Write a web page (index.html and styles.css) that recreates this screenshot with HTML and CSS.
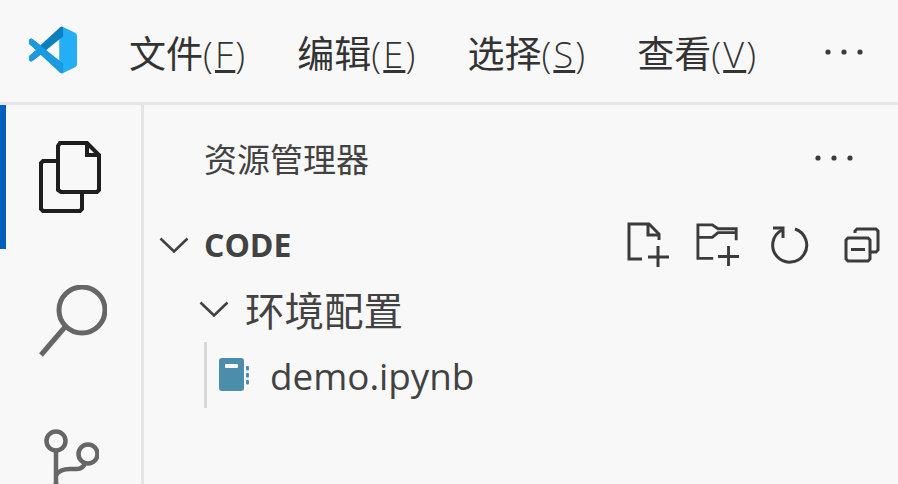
FILE: index.html
```html
<!DOCTYPE html>
<html lang="zh-CN">
<head>
  <meta charset="UTF-8" />
  <title>CODE - Visual Studio Code</title>
  <link rel="stylesheet" href="styles.css">
</head>
<body>
  <div class="titlebar">
    <svg class="logo" viewBox="0 0 100 100">
      <path d="M71 2 L96 14 Q100 16 100 21 L100 79 Q100 84 96 86 L71 98 Q67 100 63 96 L63 72 V28 L63 4 Q67 0 71 2Z" fill="#24aef6"/>
      <path d="M71 2 Q67 0 63 4 L24 40 L7 27 Q4 25 1 28 L-1 31 Q-3 34 0 37 L15 50 L0 63 Q-3 66 -1 69 L1 72 Q4 75 7 73 L24 60 L63 28 L71 22Z" fill="#0b7fc0"/>
      <path d="M7 27 Q4 25 1 28 L-1 31 Q-3 34 0 37 L15 50 L0 63 Q-3 66 -1 69 L1 72 Q4 75 7 73 L24 60 L63 96 Q67 100 71 98 L71 78 L7 27Z" fill="#1a9be0"/>
    </svg>
    <div class="menu">
      <span class="menu-item">文件<span class="paren">(<u>F</u>)</span></span>
      <span class="menu-item">编辑<span class="paren">(<u>E</u>)</span></span>
      <span class="menu-item">选择<span class="paren">(<u>S</u>)</span></span>
      <span class="menu-item">查看<span class="paren">(<u>V</u>)</span></span>
    </div>
    <svg class="dots dots-menu" viewBox="0 0 38 6"><circle cx="3" cy="3" r="2.6"/><circle cx="19" cy="3" r="2.6"/><circle cx="35" cy="3" r="2.6"/></svg>
  </div>

  <div class="main">
    <div class="activitybar">
      <div class="activity-item active">
        <svg class="activity-icon" viewBox="0 0 62 72" fill="none" stroke="#1e1e1e" stroke-width="4">
          <path d="M21 2 H48 L60 14 V49 L58 51 H22 L19 49 V5Z"/>
          <path d="M48 2 V14 H60"/>
          <path d="M19 20 H4 L2 22 V68 L4 70 H41 L43 68 V51"/>
        </svg>
      </div>
      <div class="activity-item search-item">
        <svg class="activity-icon search-icon" viewBox="0 0 68 72" fill="none" stroke="#666" stroke-width="5">
          <circle cx="43" cy="25" r="23"/>
          <path d="M26 42 L2 70"/>
        </svg>
      </div>
      <div class="activity-item git-item">
        <svg class="git-icon" viewBox="0 0 56 80" fill="none" stroke="#666" stroke-width="4.5">
          <circle cx="13" cy="13" r="9.5"/>
          <circle cx="45" cy="26" r="9.5"/>
          <circle cx="13" cy="67" r="9.5"/>
          <path d="M13 23 V57"/>
          <path d="M13 47 Q17 41 27 41 H34 Q40 41 42 35"/>
        </svg>
      </div>
    </div>

    <div class="sidebar">
      <div class="sidebar-title">
        <span>资源管理器</span>
        <svg class="dots" viewBox="0 0 38 6"><circle cx="3" cy="3" r="2.6"/><circle cx="19" cy="3" r="2.6"/><circle cx="35" cy="3" r="2.6"/></svg>
      </div>

      <div class="section-head">
        <svg class="chevron" viewBox="0 0 30 16"><path d="M1.5 1.5 L15 14.5 L28.5 1.5"/></svg>
        <span class="section-name">CODE</span>
        <div class="actions">
          <svg class="action" viewBox="0 0 44 46">
            <path d="M15 37 H2 V2 H22 L32 12 V18"/><path d="M21 2 V13 H32"/><path d="M31 24 V45 M21 35 H42"/>
          </svg>
          <svg class="action" viewBox="0 0 46 46">
            <path d="M18 37 H2 V2 H17 L23 6 H42 V18"/><path d="M2 15 H17 L23 10 H42"/><path d="M34 24 V45 M23 35 H45"/>
          </svg>
          <svg class="action action-refresh" viewBox="0 0 38 38">
            <path d="M24 3 A17 17 0 1 1 11 4"/><path d="M2 2 H12 V12"/>
          </svg>
          <svg class="action action-collapse" viewBox="0 0 36 36">
            <path d="M11 6 V4 L13 2 H32 L34 4 V23 L32 25 H27"/>
            <path d="M4 11 H24 L26 13 V32 L24 34 H4 L2 32 V13Z"/>
            <path d="M7 22.5 H21"/>
          </svg>
        </div>
      </div>

      <div class="tree-row folder-row">
        <svg class="chevron" viewBox="0 0 30 16"><path d="M1.5 1.5 L15 14.5 L28.5 1.5"/></svg>
        <span>环境配置</span>
      </div>

      <div class="tree-group">
        <div class="tree-row file-row">
          <svg class="file-icon" viewBox="0 0 30 34">
            <rect x="0" y="0" width="25" height="33" rx="3" fill="#4d8dac"/>
            <rect x="6" y="6" width="13" height="4" rx="1" fill="#f8f8f8"/>
            <rect x="27" y="8" width="3" height="4.5" rx="1" fill="#4d8dac"/>
            <rect x="27" y="15" width="3" height="4.5" rx="1" fill="#4d8dac"/>
            <rect x="27" y="22" width="3" height="4.5" rx="1" fill="#4d8dac"/>
          </svg>
          <span>demo.ipynb</span>
        </div>
      </div>
    </div>
  </div>
</body>
</html>
```

FILE: styles.css
```css
* {
  box-sizing: border-box;
  margin: 0;
  padding: 0;
}

html, body {
  height: 100%;
  overflow: hidden;
}

body {
  display: flex;
  flex-direction: column;
  background: #f8f8f8;
  font-family: "Open Sans", "Noto Sans CJK SC", sans-serif;
  color: #424242;
}

/* title bar */
.titlebar {
  display: flex;
  align-items: center;
  flex: none;
  height: 105px;
  padding: 0 0 3px 29px;
  border-bottom: 3px solid #e5e5e5;
}

.logo {
  flex: none;
  width: 48px;
  height: 48px;
}

.menu {
  display: flex;
  gap: 50px;
  margin: 5px 0 0 52px;
  font-size: 37px;
  color: #333;
}

.menu-item {
  display: inline-flex;
  align-items: baseline;
  white-space: nowrap;
}

.paren {
  font-size: 36px;
  font-weight: 300;
  letter-spacing: 2.2px;
}

.dots {
  flex: none;
  width: 38px;
  height: 6px;
  fill: #3b3b3b;
}

.dots-menu {
  margin: 4px 35px 0 auto;
}

.main {
  display: flex;
  flex: 1;
  min-height: 0;
}

/* activity bar */
.activitybar {
  display: flex;
  flex-direction: column;
  flex: none;
  width: 144px;
  border-right: 3px solid #e5e5e5;
  overflow: hidden;
}

.activity-item {
  display: flex;
  justify-content: center;
  align-items: center;
  flex: none;
  height: 144px;
}

.activity-item.active {
  border-left: 6px solid #005fb8;
  padding-right: 8px;
}

.activity-icon {
  width: 62px;
  height: 72px;
}

.search-item {
  padding-left: 4px;
}

.search-icon {
  width: 68px;
  height: 72px;
}

.git-item {
  flex: 1;
  min-height: 0;
  align-items: flex-start;
  justify-content: flex-start;
  padding: 35px 0 0 43px;
  overflow: hidden;
}

.git-icon {
  flex: none;
  width: 56px;
  height: 80px;
}

/* explorer */
.sidebar {
  flex: 1;
  min-width: 0;
}

.sidebar-title {
  display: flex;
  justify-content: space-between;
  align-items: center;
  height: 106px;
  padding: 0 45px 0 60px;
  font-size: 33px;
}

.section-head {
  display: flex;
  align-items: center;
  height: 65px;
  padding: 2px 0 0 15px;
}

.section-name {
  margin-left: 15px;
  font-size: 32px;
  font-weight: 700;
}

.chevron {
  flex: none;
  width: 30px;
  height: 16px;
  fill: none;
  stroke: #424242;
  stroke-width: 2.6;
}

.actions {
  display: flex;
  align-items: center;
  margin: 0 18px 0 auto;
  gap: 25px;
}

.action {
  width: 44px;
  height: 46px;
  fill: none;
  stroke: #3b3b3b;
  stroke-width: 3;
}

.action-refresh {
  width: 38px;
  height: 38px;
  margin-left: 6px;
}

.action-collapse {
  width: 36px;
  height: 36px;
  margin-left: 10px;
}

.tree-row {
  display: flex;
  align-items: center;
  height: 66px;
}

.folder-row {
  padding-left: 55px;
  font-size: 39.5px;
}

.folder-row span {
  margin-left: 16px;
}

.tree-group {
  margin-left: 60px;
  border-left: 3px solid #d8d8d8;
}

.file-row {
  padding-left: 12px;
  font-size: 36.8px;
}

.file-icon {
  flex: none;
  width: 30px;
  height: 34px;
}

.file-row span {
  margin-left: 21px;
  padding-top: 2px;
}
```
